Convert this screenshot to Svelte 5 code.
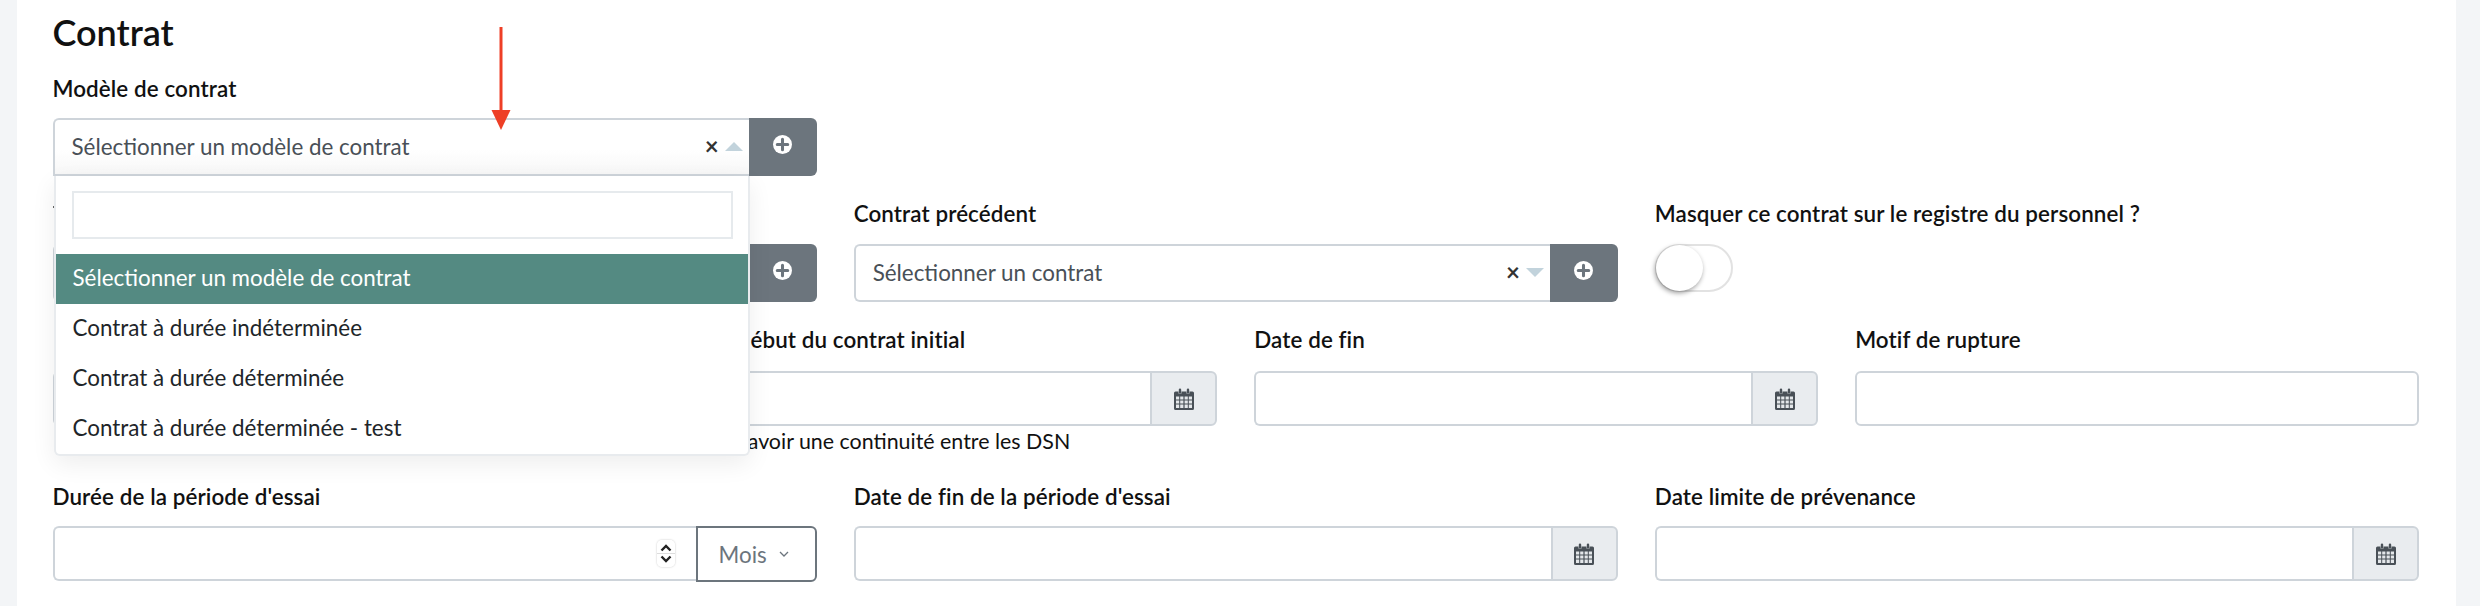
<script>
  const options = [
    'Sélectionner un modèle de contrat',
    'Contrat à durée indéterminée',
    'Contrat à durée déterminée',
    'Contrat à durée déterminée - test',
  ];
</script>

{#snippet plusButton()}
  <button class="plus-btn" aria-label="Ajouter">
    <svg viewBox="0 0 20 20" width="19" height="19">
      <circle cx="10" cy="10" r="10" fill="#fff" />
      <path d="M10 4.5v11M4.5 10h11" stroke="#6c757d" stroke-width="3.2" stroke-linecap="round" />
    </svg>
  </button>
{/snippet}

{#snippet calendar()}
  <span class="addon">
    <svg viewBox="0 0 20 22" width="20" height="22">
      <path d="M1.5 3.5h3v2h3v-2h5v2h3v-2h3a1.5 1.5 0 0 1 1.5 1.5v15.5a1.5 1.5 0 0 1-1.5 1.5h-17A1.5 1.5 0 0 1 0 20.500V5a1.500 1.500 0 0 1 1.500-1.500z" fill="#495057" />
      <rect x="4.800" y="0.500" width="2.400" height="5" rx="1.200" fill="#495057" />
      <rect x="12.800" y="0.500" width="2.400" height="5" rx="1.200" fill="#495057" />
      <path d="M2 8.500h3.200v3H2zM6.200 8.500h3.200v3H6.200zM10.600 8.500h3.200v3h-3.200zM14.800 8.500H18v3h-3.200zM2 12.500h3.200v3H2zM6.200 12.500h3.200v3H6.200zM10.600 12.500h3.200v3h-3.200zM14.800 12.500H18v3h-3.200zM2 16.500h3.200v3.500H2zM6.200 16.500h3.200v3.500H6.200zM10.600 16.500h3.200v3.500h-3.200zM14.800 16.500H18v3.500h-3.200z" fill="#e4e7ea" />
    </svg>
  </span>
{/snippet}

{#snippet dateField(label)}
  <div class="field">
    <span class="label">{label}</span>
    <div class="input-group">
      <input class="input joined" type="text" />
      {@render calendar()}
    </div>
  </div>
{/snippet}

<main class="card">
  <h2>Contrat</h2>

  <div class="row cols-3 first">
    <div class="field">
      <span class="label">Modèle de contrat</span>
      <div class="select-group">
        <div class="select open">
          <span class="value">Sélectionner un modèle de contrat</span>
          <span class="clear">×</span>
          <span class="caret up"></span>
          <div class="dropdown">
            <div class="search"><input type="text" /></div>
            <ul>
              {#each options as option, i}
                <li class:active={i === 0}>{option}</li>
              {/each}
            </ul>
          </div>
        </div>
        {@render plusButton()}
      </div>
    </div>
  </div>

  <div class="row cols-3">
    <div class="field">
      <span class="label covered"></span>
      <div class="select-group">
        <div class="select"><span class="value"></span></div>
        {@render plusButton()}
      </div>
    </div>
    <div class="field">
      <span class="label">Contrat précédent</span>
      <div class="select-group">
        <div class="select">
          <span class="value">Sélectionner un contrat</span>
          <span class="clear">×</span>
          <span class="caret"></span>
        </div>
        {@render plusButton()}
      </div>
    </div>
    <div class="field">
      <span class="label">Masquer ce contrat sur le registre du personnel ?</span>
      <span class="toggle"><span class="knob"></span></span>
    </div>
  </div>

  <div class="row cols-4">
    <div class="field">
      <span class="label"></span>
      <div class="input-group">
        <input class="input joined" type="text" />
        {@render calendar()}
      </div>
    </div>
    <div class="field">
      <span class="label">Date de début du contrat initial</span>
      <div class="input-group">
        <input class="input joined" type="text" />
        {@render calendar()}
      </div>
      <p class="help">Permet d'avoir une continuité entre les DSN</p>
    </div>
    {@render dateField('Date de fin')}
    <div class="field">
      <span class="label">Motif de rupture</span>
      <input class="input" type="text" />
    </div>
  </div>

  <div class="row cols-3 last">
    <div class="field">
      <span class="label">Durée de la période d'essai</span>
      <div class="input-group">
        <div class="number">
          <span class="spinner">
            <svg viewBox="0 0 18 27" width="18" height="27">
              <path d="M4.500 10.500l4.500-4.500 4.500 4.500M4.500 16.500l4.500 4.500 4.500-4.500" fill="none" stroke="#222" stroke-width="2.400" />
            </svg>
          </span>
        </div>
        <button class="unit">
          Mois
          <svg viewBox="0 0 10 6" width="10" height="6">
            <path d="M1 1l4 4 4-4" fill="none" stroke="#6c757d" stroke-width="1.300" />
          </svg>
        </button>
      </div>
    </div>
    {@render dateField("Date de fin de la période d'essai")}
    {@render dateField('Date limite de prévenance')}
  </div>

  <svg class="annotation" viewBox="0 0 20 103" width="20" height="103">
    <path d="M10 0v84" stroke="#ee3f26" stroke-width="3" />
    <path d="M0.500 83h19L10 103z" fill="#ee3f26" />
  </svg>
</main>

<style>
  :global(body) {
    margin: 0;
    background: #f3f5f7;
  }
  .card {
    position: relative;
    box-sizing: border-box;
    margin-left: 17px;
    width: 2439px;
    height: 606px;
    padding: 7px 37px 0 35.5px;
    background: #fff;
    overflow: hidden;
    font-family: Lato, "Open Sans", sans-serif;
    font-size: 22.4px;
    color: #212529;
  }
  h2 {
    margin: 0 0 15px;
    font-size: 36px;
    line-height: 50px;
    font-weight: 600;
    color: #111;
  }
  .row {
    display: grid;
    column-gap: 37px;
    margin-bottom: 21px;
  }
  .first {
    position: relative;
    z-index: 5;
  }
  .cols-3 { grid-template-columns: repeat(3, 1fr); }
  .cols-4 { grid-template-columns: repeat(4, 1fr); margin-bottom: 24px; }
  .last { margin-top: 1px; }
  .field { min-width: 0; }
  .label {
    display: block;
    margin-bottom: 13px;
    height: 34px;
    line-height: 34px;
    font-weight: 600;
    letter-spacing: 0.1px;
    color: #111;
    white-space: nowrap;
  }
  .first .label, .last .label { margin-bottom: 12px; }
  .cols-4 .label { margin-bottom: 14px; }
  .covered::before {
    content: '';
    display: block;
    position: relative;
    top: 9px;
    width: 2px;
    height: 2px;
    background: #666;
  }
  .select-group, .input-group { display: flex; }
  .select {
    position: relative;
    flex: 1;
    box-sizing: border-box;
    display: flex;
    align-items: center;
    height: 58px;
    padding: 0 6px 2px 17px;
    border: 2px solid #ced4da;
    border-right: 0;
    border-radius: 6px 0 0 6px;
    color: #495057;
  }
  .select.open {
    border-radius: 6px 0 0 0;
    background: linear-gradient(#fff 55%, #f7f7f7);
  }
  .value { flex: 1; white-space: nowrap; }
  .clear {
    font-size: 24px;
    line-height: 1;
    font-weight: 700;
    color: #333;
    margin-right: 6px;
  }
  .caret {
    width: 0;
    height: 0;
    border-left: 9px solid transparent;
    border-right: 9px solid transparent;
    border-top: 9px solid #c2d3dc;
  }
  .caret.up {
    border-top: 0;
    border-bottom: 9px solid #c2d3dc;
  }
  .plus-btn {
    width: 68px;
    height: 58px;
    padding: 0 0 6px;
    border: 0;
    border-radius: 0 6px 6px 0;
    background: #6c757d;
    display: flex;
    align-items: center;
    justify-content: center;
  }
  .dropdown {
    position: absolute;
    top: 56px;
    left: -1px;
    right: -1px;
    box-sizing: border-box;
    background: #fff;
    color: #212529;
    border: 2px solid #e8ebee;
    border-top: 0;
    border-radius: 0 0 6px 6px;
    box-shadow: 0 8px 24px rgba(0, 0, 0, 0.07);
  }
  .search { padding: 15px 15px 15px 16px; }
  .search input {
    display: block;
    box-sizing: border-box;
    width: 100%;
    height: 48px;
    border: 2px solid #e6eaed;
    outline: 0;
  }
  ul { margin: 0; padding: 0; list-style: none; }
  li {
    height: 50px;
    line-height: 48px;
    padding-left: 17px;
    white-space: nowrap;
  }
  li.active { background: #548a82; color: #fff; }
  .input {
    display: block;
    box-sizing: border-box;
    width: 100%;
    min-width: 0;
    height: 55px;
    border: 2px solid #ced4da;
    border-radius: 6px;
    background: #fff;
    outline: 0;
  }
  .input.joined {
    flex: 1;
    border-right: 0;
    border-radius: 6px 0 0 6px;
  }
  .addon {
    box-sizing: border-box;
    flex: none;
    width: 67px;
    height: 55px;
    display: flex;
    align-items: center;
    justify-content: center;
    background: #e9ecef;
    border: 2px solid #ced4da;
    border-radius: 0 6px 6px 0;
  }
  .help {
    margin: 0;
    padding-left: 5px;
    font-size: 21.4px;
    line-height: 30px;
    color: #111;
    white-space: nowrap;
  }
  .toggle {
    display: block;
    position: relative;
    box-sizing: border-box;
    width: 78px;
    height: 48px;
    border: 2px solid #e2e2e2;
    border-radius: 24px;
    background: #fff;
  }
  .knob {
    position: absolute;
    top: -1px;
    left: -1px;
    width: 47px;
    height: 46px;
    border-radius: 50%;
    background: #fff;
    box-shadow: -1px 2px 5px rgba(0, 0, 0, 0.4);
  }
  .number {
    flex: 1;
    box-sizing: border-box;
    height: 55px;
    display: flex;
    align-items: center;
    justify-content: flex-end;
    padding-right: 21px;
    border: 2px solid #ced4da;
    border-right: 0;
    border-radius: 6px 0 0 6px;
  }
  .spinner {
    display: block;
    width: 18px;
    height: 27px;
    border-radius: 5px;
    background: linear-gradient(#fff 48%, #ddd 48%, #ddd 52%, #fff 52%);
    box-shadow: 0 0 2px rgba(0, 0, 0, 0.25);
  }
  .spinner svg { display: block; }
  .unit {
    box-sizing: border-box;
    flex: none;
    width: 121px;
    height: 56px;
    display: flex;
    align-items: center;
    justify-content: center;
    gap: 12px;
    padding: 0 5px 0 0;
    background: #fff;
    border: 2px solid #6c757d;
    border-radius: 0 6px 6px 0;
    font: inherit;
    color: #6c757d;
  }
  .annotation {
    position: absolute;
    left: 474px;
    top: 27px;
    z-index: 9;
  }
</style>
